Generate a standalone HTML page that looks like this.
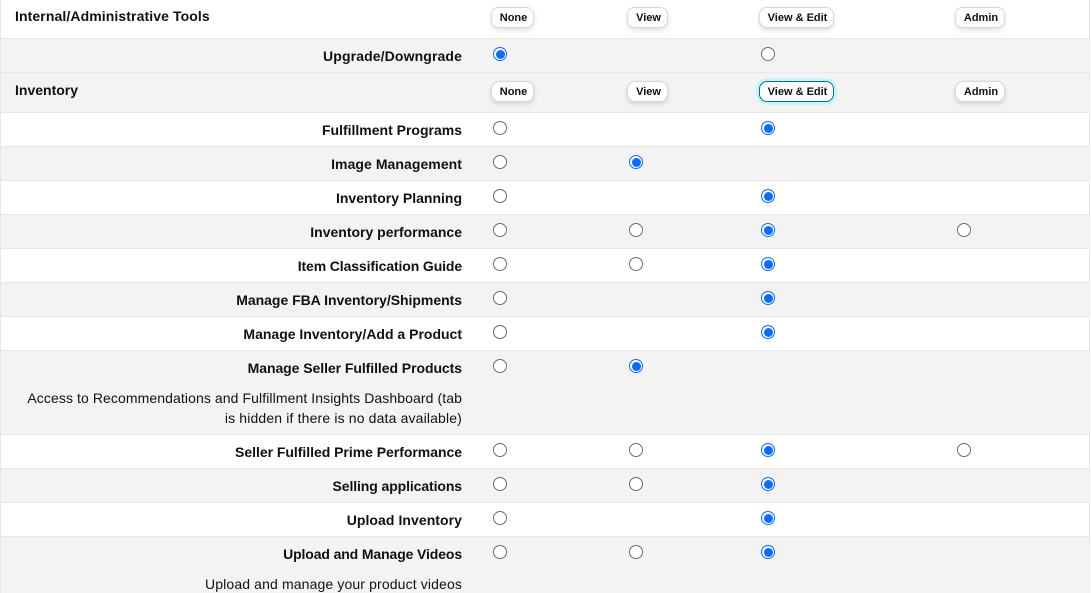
<!DOCTYPE html>
<html><head><meta charset="utf-8"><style>
html,body{margin:0;padding:0;background:#fff;overflow:hidden;height:593px}
body{width:1091px;height:593px;overflow:hidden;position:relative;font-family:"Liberation Sans",sans-serif;color:#0f1111}
#wrap{position:absolute;left:0;top:0;width:1091px;height:593px;overflow:hidden}
.row{position:absolute;left:1px;width:1088px;box-sizing:border-box;border-bottom:1px solid #e7e7e7}
.g{background:#f3f3f3}
.l{position:absolute;right:629px;white-space:nowrap;font-size:14px;font-weight:700;line-height:20px;text-align:right}
.h{position:absolute;left:15px;white-space:nowrap;font-size:14px;font-weight:700;line-height:20px}
.d{position:absolute;right:629px;white-space:nowrap;font-size:14px;line-height:20px;text-align:right}
.b{position:absolute;box-sizing:border-box;height:21px;background:#fff;border:1px solid #d5d9d9;border-radius:8px;box-shadow:0 2px 5px rgba(15,17,17,.15);font-size:11px;font-weight:700;line-height:20px;padding-left:2px;text-align:center;white-space:nowrap}
.f{border-color:#007185;box-shadow:0 0 0 3px #c8f3fa}
.r{position:absolute;box-sizing:border-box;width:14px;height:14px;border-radius:50%;border:1px solid #6c6c6c;background:#fff}
.c{border:1px solid #0a6cff;background:#fff}
.c:after{content:"";position:absolute;left:1.5px;top:1.5px;width:9px;height:9px;border-radius:50%;background:#0a6cff}
#side{position:absolute;left:0;top:0;width:1px;height:593px;background:#e7e7e7}
#side2{position:absolute;left:1089px;top:0;width:1px;height:593px;background:#e7e7e7}
</style></head><body><div id="wrap">
<div class="row" style="top:0;height:39px"></div>
<div class="row g" style="top:39px;height:34px"></div>
<div class="row g" style="top:73px;height:40px"></div>
<div class="row" style="top:113px;height:34px"></div>
<div class="row g" style="top:147px;height:34px"></div>
<div class="row" style="top:181px;height:34px"></div>
<div class="row g" style="top:215px;height:34px"></div>
<div class="row" style="top:249px;height:34px"></div>
<div class="row g" style="top:283px;height:34px"></div>
<div class="row" style="top:317px;height:34px"></div>
<div class="row g" style="top:351px;height:84px"></div>
<div class="row" style="top:435px;height:34px"></div>
<div class="row g" style="top:469px;height:34px"></div>
<div class="row" style="top:503px;height:34px"></div>
<div class="row g" style="top:537px;height:56px;border-bottom:0"></div>
<div id="side"></div><div id="side2"></div>

<div class="h" style="top:6px;letter-spacing:.1px">Internal/Administrative Tools</div>
<div class="b" style="left:491px;top:7px;width:43px">None</div>
<div class="b" style="left:627px;top:7px;width:41px">View</div>
<div class="b" style="left:759px;top:7px;width:75px">View &amp; Edit</div>
<div class="b" style="left:955px;top:7px;width:50px">Admin</div>

<div class="l" style="top:46px;letter-spacing:.12px">Upgrade/Downgrade</div>
<div class="r c" style="left:493px;top:47px"></div>
<div class="r" style="left:761px;top:47px"></div>

<div class="h" style="top:80px">Inventory</div>
<div class="b" style="left:491px;top:81px;width:43px">None</div>
<div class="b" style="left:627px;top:81px;width:41px">View</div>
<div class="b f" style="left:759px;top:81px;width:75px">View &amp; Edit</div>
<div class="b" style="left:955px;top:81px;width:50px">Admin</div>

<div class="l" style="top:120px">Fulfillment Programs</div>
<div class="r" style="left:493px;top:121px"></div>
<div class="r c" style="left:761px;top:121px"></div>

<div class="l" style="top:154px;letter-spacing:.06px">Image Management</div>
<div class="r" style="left:493px;top:155px"></div>
<div class="r c" style="left:629px;top:155px"></div>

<div class="l" style="top:188px">Inventory Planning</div>
<div class="r" style="left:493px;top:189px"></div>
<div class="r c" style="left:761px;top:189px"></div>

<div class="l" style="top:222px">Inventory performance</div>
<div class="r" style="left:493px;top:223px"></div>
<div class="r" style="left:629px;top:223px"></div>
<div class="r c" style="left:761px;top:223px"></div>
<div class="r" style="left:957px;top:223px"></div>

<div class="l" style="top:256px;letter-spacing:-.12px">Item Classification Guide</div>
<div class="r" style="left:493px;top:257px"></div>
<div class="r" style="left:629px;top:257px"></div>
<div class="r c" style="left:761px;top:257px"></div>

<div class="l" style="top:290px;letter-spacing:-.03px">Manage FBA Inventory/Shipments</div>
<div class="r" style="left:493px;top:291px"></div>
<div class="r c" style="left:761px;top:291px"></div>

<div class="l" style="top:324px">Manage Inventory/Add a Product</div>
<div class="r" style="left:493px;top:325px"></div>
<div class="r c" style="left:761px;top:325px"></div>

<div class="l" style="top:358px;letter-spacing:-.06px">Manage Seller Fulfilled Products</div>
<div class="d" style="top:388px;letter-spacing:.09px">Access to Recommendations and Fulfillment Insights Dashboard (tab</div>
<div class="d" style="top:408px;letter-spacing:.15px">is hidden if there is no data available)</div>
<div class="r" style="left:493px;top:359px"></div>
<div class="r c" style="left:629px;top:359px"></div>

<div class="l" style="top:442px;letter-spacing:-.03px">Seller Fulfilled Prime Performance</div>
<div class="r" style="left:493px;top:443px"></div>
<div class="r" style="left:629px;top:443px"></div>
<div class="r c" style="left:761px;top:443px"></div>
<div class="r" style="left:957px;top:443px"></div>

<div class="l" style="top:476px;letter-spacing:-.1px">Selling applications</div>
<div class="r" style="left:493px;top:477px"></div>
<div class="r" style="left:629px;top:477px"></div>
<div class="r c" style="left:761px;top:477px"></div>

<div class="l" style="top:510px;letter-spacing:.06px">Upload Inventory</div>
<div class="r" style="left:493px;top:511px"></div>
<div class="r c" style="left:761px;top:511px"></div>

<div class="l" style="top:544px;letter-spacing:-.12px">Upload and Manage Videos</div>
<div class="d" style="top:574px;letter-spacing:.13px">Upload and manage your product videos</div>
<div class="r" style="left:493px;top:545px"></div>
<div class="r" style="left:629px;top:545px"></div>
<div class="r c" style="left:761px;top:545px"></div>
</div></body></html>
